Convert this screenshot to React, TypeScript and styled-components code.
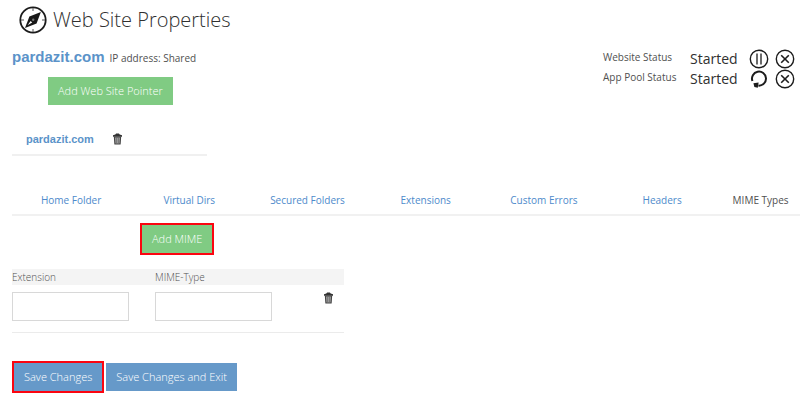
import React from "react";
import styled, { createGlobalStyle } from "styled-components";

const Global = createGlobalStyle`
  * { box-sizing: border-box; }
  body {
    margin: 0;
    background: #fff;
    color: #505050;
    font: 10px/16px "Open Sans", "Noto Sans", sans-serif;
  }
  button, input { font: inherit; }
`;

const Page = styled.main`
  padding: 4px 0 8px 12px;
`;

const TitleBar = styled.header`
  display: flex;
  align-items: center;
  gap: 6px;
  height: 32px;
  padding-left: 7px;
`;

const Title = styled.h1`
  margin: 0;
  font-size: 20px;
  line-height: 28px;
  font-weight: 300;
  color: #303030;
`;

const Summary = styled.section`
  display: flex;
  justify-content: space-between;
  padding: 11px 5px 0 0;
`;

const SiteLine = styled.div`
  display: flex;
  align-items: baseline;
  gap: 5px;
  height: 30px;
`;

const SiteLink = styled.a<{ $large?: boolean }>`
  font-family: "Liberation Sans", Arial, sans-serif;
  font-weight: 700;
  font-size: ${(p) => (p.$large ? "15px" : "11px")};
  line-height: ${(p) => (p.$large ? "20px" : "16px")};
  color: #5b93c9;
  text-decoration: none;
`;

const StatusGrid = styled.div`
  display: grid;
  grid-template-columns: 87px 59px 46px;
  grid-auto-rows: 20px;
  align-items: center;
  align-content: start;
  padding-top: 2px;
`;

const StatusLabel = styled.span`
  align-self: start;
`;

const StatusValue = styled.span`
  font-size: 14px;
  line-height: 20px;
  color: #303030;
`;

const StatusActions = styled.div`
  display: flex;
  gap: 6px;
`;

const IconButton = styled.button`
  display: flex;
  flex: none;
  padding: 0;
  border: 0;
  background: none;
  color: #1c1c1c;
  cursor: pointer;
`;

const Button = styled.button<{ $tone: "green" | "blue" }>`
  height: 28px;
  padding: 0 10px;
  border: 0;
  background: ${(p) => (p.$tone === "green" ? "#80cb83" : "#6699c9")};
  color: #fff;
  font-size: 11px;
  font-weight: 300;
  line-height: 28px;
  cursor: pointer;
`;

const Highlight = styled.div`
  display: inline-flex;
  border: 2px solid #fb0510;
`;

const PointerAction = styled.div`
  padding-left: 36px;
`;

const PointerRow = styled.div`
  display: flex;
  align-items: center;
  gap: 18px;
  width: 195px;
  height: 33px;
  margin-top: 18px;
  padding-left: 14px;
  border-bottom: 2px solid #f0f0f0;
`;

const Tabs = styled.nav`
  display: grid;
  grid-template-columns: repeat(6, 3fr) 2fr;
  height: 28px;
  margin-top: 32px;
  border-bottom: 2px solid #f1f1f1;
  text-align: center;
  padding-top: 4px;
`;

const Tab = styled.a<{ $active?: boolean }>`
  color: ${(p) => (p.$active ? "#505050" : "#4d8acb")};
  text-decoration: none;
  white-space: nowrap;
`;

const MimeAction = styled.div`
  display: flex;
  padding: 7px 0 0 128px;
`;

const MimeTable = styled.table`
  width: 332px;
  margin-top: 14px;
  border-collapse: collapse;
  table-layout: fixed;
  border-bottom: 1px solid #ebebeb;
`;

const Head = styled.th<{ $width?: number }>`
  width: ${(p) => (p.$width ? `${p.$width}px` : "auto")};
  height: 16px;
  padding: 0;
  background: #f4f4f4;
  font-weight: 300;
  text-align: left;
`;

const Cell = styled.td`
  height: 47px;
  padding: 7px 0 11px;
  vertical-align: top;
`;

const TextInput = styled.input`
  display: block;
  width: 117px;
  height: 29px;
  padding: 0 6px;
  border: 1px solid #d8d8d8;
  background: #fff;
`;

const Footer = styled.footer`
  display: flex;
  align-items: center;
  gap: 2px;
  margin-top: 28px;
`;

const Compass = () => (
  <svg width="28" height="28" viewBox="0 0 28 28" aria-hidden="true">
    <circle cx="14" cy="14" r="12.7" fill="none" stroke="#1c1c1c" strokeWidth="1.8" />
    <path d="M14 2v3M14 23v3M2 14h3M23 14h3" stroke="#555" strokeWidth="1" />
    <path d="M21.9 6.1 17.6 17.4 6 21.9 10.4 10.6Z" fill="#181818" />
    <path d="m11.6 15 1.6 1.6-4.6 2.6Z" fill="#fff" />
    <circle cx="14.2" cy="13.8" r="1.2" fill="#777" />
  </svg>
);

const PauseIcon = () => (
  <svg width="20" height="20" viewBox="0 0 20 20" aria-hidden="true">
    <circle cx="10" cy="10" r="8.7" fill="none" stroke="currentColor" strokeWidth="1.4" />
    <path d="M8 4.5v11M12 4.5v11" stroke="currentColor" strokeWidth="1.3" />
  </svg>
);

const CloseIcon = () => (
  <svg width="20" height="20" viewBox="0 0 20 20" aria-hidden="true">
    <circle cx="10" cy="10" r="8.7" fill="none" stroke="currentColor" strokeWidth="1.4" />
    <path d="m6.2 6.2 7.6 7.6M13.8 6.2l-7.6 7.6" stroke="currentColor" strokeWidth="1.6" />
  </svg>
);

const RestartIcon = () => (
  <svg width="20" height="20" viewBox="0 0 20 20" aria-hidden="true">
    <path d="M3.4 12A7 7 0 1 1 9.4 16.6" fill="none" stroke="currentColor" strokeWidth="2" />
    <path d="M4.4 14.2 9.6 13.4 8.8 18.8 5.4 18Z" fill="currentColor" />
  </svg>
);

const TrashIcon = () => (
  <svg width="11" height="12" viewBox="0 0 11 12" aria-hidden="true">
    <path d="M1 3.8V2.2l2.3-.6.8-1h2.8l.8 1 2.3.6v1.6Z" fill="#333" />
    <path d="M2.4 4h6.2l-.5 7H2.9Z" fill="#999" stroke="#444" strokeWidth="1.1" />
    <path d="M4.5 5v5M6.5 5v5" stroke="#666" strokeWidth=".6" />
  </svg>
);

const tabs = [
  "Home Folder",
  "Virtual Dirs",
  "Secured Folders",
  "Extensions",
  "Custom Errors",
  "Headers",
  "MIME Types",
];

export default function App() {
  return (
    <>
      <Global />
      <Page>
        <TitleBar>
          <Compass />
          <Title>Web Site Properties</Title>
        </TitleBar>

        <Summary>
          <div>
            <SiteLine>
              <SiteLink href="#site" $large>pardazit.com</SiteLink>
              <span>IP address: Shared</span>
            </SiteLine>
            <PointerAction>
              <Button type="button" $tone="green">Add Web Site Pointer</Button>
            </PointerAction>
          </div>
          <StatusGrid>
            <StatusLabel>Website Status</StatusLabel>
            <StatusValue>Started</StatusValue>
            <StatusActions>
              <IconButton type="button" aria-label="Pause website"><PauseIcon /></IconButton>
              <IconButton type="button" aria-label="Stop website"><CloseIcon /></IconButton>
            </StatusActions>
            <StatusLabel>App Pool Status</StatusLabel>
            <StatusValue>Started</StatusValue>
            <StatusActions>
              <IconButton type="button" aria-label="Restart app pool"><RestartIcon /></IconButton>
              <IconButton type="button" aria-label="Stop app pool"><CloseIcon /></IconButton>
            </StatusActions>
          </StatusGrid>
        </Summary>

        <PointerRow>
          <SiteLink href="#pointer">pardazit.com</SiteLink>
          <IconButton type="button" aria-label="Delete pointer"><TrashIcon /></IconButton>
        </PointerRow>

        <Tabs aria-label="Site settings">
          {tabs.map((name) => {
            const active = name === "MIME Types";
            return (
              <Tab key={name} href="#tab" $active={active} aria-current={active ? "page" : undefined}>
                {name}
              </Tab>
            );
          })}
        </Tabs>

        <MimeAction>
          <Highlight>
            <Button type="button" $tone="green">Add MIME</Button>
          </Highlight>
        </MimeAction>

        <MimeTable>
          <thead>
            <tr>
              <Head $width={143} id="extension">Extension</Head>
              <Head $width={168} id="mime-type">MIME-Type</Head>
              <Head aria-label="Actions" />
            </tr>
          </thead>
          <tbody>
            <tr>
              <Cell><TextInput type="text" aria-labelledby="extension" /></Cell>
              <Cell><TextInput type="text" aria-labelledby="mime-type" /></Cell>
              <Cell>
                <IconButton type="button" aria-label="Delete MIME type"><TrashIcon /></IconButton>
              </Cell>
            </tr>
          </tbody>
        </MimeTable>

        <Footer>
          <Highlight>
            <Button type="button" $tone="blue">Save Changes</Button>
          </Highlight>
          <Button type="button" $tone="blue">Save Changes and Exit</Button>
        </Footer>
      </Page>
    </>
  );
}
